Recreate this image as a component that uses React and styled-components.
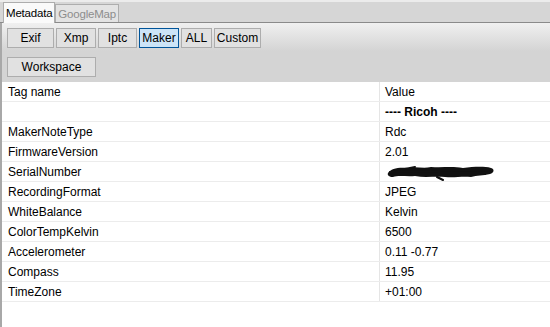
import React from "react";
import styled, { createGlobalStyle } from "styled-components";

const GlobalStyle = createGlobalStyle`
  html, body {
    margin: 0;
    padding: 0;
    background: #ffffff;
  }
  body {
    font-family: "Liberation Sans", Arial, sans-serif;
    font-size: 12px;
    color: #000;
  }
`;

const Window = styled.div`
  width: 550px;
  height: 327px;
  overflow: hidden;
  display: flex;
  flex-direction: column;
  background: #ffffff;
`;

const TabBar = styled.div`
  height: 23px;
  display: flex;
  align-items: flex-end;
  padding-left: 3px;
  background: linear-gradient(#ececec 0, #ececec 2px, #d6d6d6 2px);
  border-bottom: 1px solid #8a8a8a;
  box-sizing: border-box;
`;

const Tab = styled.div`
  height: ${({ active }) => (active ? "21px" : "18px")};
  padding: 0 2px;
  box-sizing: border-box;
  display: flex;
  align-items: center;
  font-size: 11.5px;
  letter-spacing: -0.2px;
  border: 1px solid #adadad;
  border-bottom: none;
  background: ${({ active }) => (active ? "#fafafa" : "#e3e3e3")};
  color: ${({ active }) => (active ? "#000" : "#8d8d8d")};
  margin-bottom: ${({ active }) => (active ? "-1px" : "0")};
  position: relative;
  z-index: ${({ active }) => (active ? 1 : 0)};
`;

const Panel = styled.div`
  flex: 1;
  display: flex;
  flex-direction: column;
  border-left: 2px solid #a8a8a8;
`;

const Toolbar = styled.div`
  height: 59px;
  padding: 5px 0 0 5px;
  box-sizing: border-box;
  display: flex;
  flex-direction: column;
  gap: 9px;
  background: linear-gradient(#f0f0f0 0, #d4d4d4 28px, #d4d4d4 100%);
`;

const ButtonRow = styled.div`
  display: flex;
  gap: 2px;
`;

const Button = styled.div`
  width: ${({ w }) => w}px;
  height: 20px;
  box-sizing: border-box;
  display: flex;
  align-items: center;
  justify-content: center;
  background: ${({ selected }) => (selected ? "#cce4f7" : "#e1e1e1")};
  border: 1px solid ${({ selected }) => (selected ? "#005499" : "#adadad")};
  color: #000;
`;

const Table = styled.div`
  flex: 1;
  background: #fff;
`;

const Row = styled.div`
  display: grid;
  grid-template-columns: 378px 1fr;
  height: 20px;
  border-bottom: 1px solid #ececec;
  box-sizing: border-box;
`;

const Cell = styled.div`
  display: flex;
  align-items: center;
  padding-left: ${({ first }) => (first ? "6px" : "5px")};
  padding-top: 1px;
  border-right: ${({ first }) => (first ? "1px solid #e5e5e5" : "none")};
  font-weight: ${({ bold }) => (bold ? 700 : 400)};
  white-space: nowrap;
  overflow: hidden;
`;

const Scribble = () => (
  <svg width="112" height="18" viewBox="0 0 112 18">
    <path
      d="M3 10 C6 5, 14 4, 24 5 C30 3, 38 6, 46 4 C58 5, 66 3, 78 5 C88 4, 98 3, 106 5 C110 6, 109 10, 105 11 C98 13, 92 12, 86 14 C76 13, 70 15, 60 14 C50 13, 40 15, 30 13 C22 14, 14 12, 8 14 C4 14, 2 12, 3 10 Z"
      fill="#111"
    />
    <path d="M5 9 L104 7 M8 11 L100 11 M52 14 L58 17 M20 6 L30 4" stroke="#111" strokeWidth="2" strokeLinecap="round" />
  </svg>
);

const buttons = [
  { label: "Exif", w: 47 },
  { label: "Xmp", w: 40 },
  { label: "Iptc", w: 39 },
  { label: "Maker", w: 40, selected: true },
  { label: "ALL", w: 31 },
  { label: "Custom", w: 47 },
];

const rows = [
  ["MakerNoteType", "Rdc"],
  ["FirmwareVersion", "2.01"],
  ["SerialNumber", null],
  ["RecordingFormat", "JPEG"],
  ["WhiteBalance", "Kelvin"],
  ["ColorTempKelvin", "6500"],
  ["Accelerometer", "0.11 -0.77"],
  ["Compass", "11.95"],
  ["TimeZone", "+01:00"],
];

export default function App() {
  return (
    <Window>
      <GlobalStyle />
      <TabBar>
        <Tab active>Metadata</Tab>
        <Tab>GoogleMap</Tab>
      </TabBar>
      <Panel>
        <Toolbar>
          <ButtonRow>
            {buttons.map((b) => (
              <Button key={b.label} w={b.w} selected={b.selected}>
                {b.label}
              </Button>
            ))}
          </ButtonRow>
          <ButtonRow>
            <Button w={89}>Workspace</Button>
          </ButtonRow>
        </Toolbar>
        <Table>
          <Row>
            <Cell first>Tag name</Cell>
            <Cell>Value</Cell>
          </Row>
          <Row>
            <Cell first />
            <Cell bold>---- Ricoh ----</Cell>
          </Row>
          {rows.map(([k, v]) => (
            <Row key={k}>
              <Cell first>{k}</Cell>
              <Cell>{v === null ? <Scribble /> : v}</Cell>
            </Row>
          ))}
        </Table>
      </Panel>
    </Window>
  );
}
